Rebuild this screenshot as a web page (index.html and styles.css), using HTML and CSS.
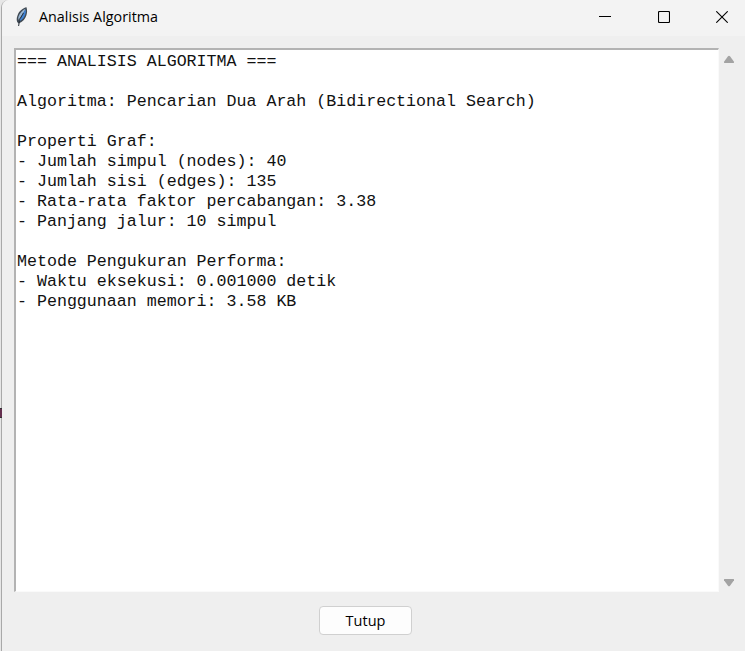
FILE: index.html
```html
<!DOCTYPE html>
<html lang="id">
<head>
<meta charset="utf-8">
<title>Analisis Algoritma</title>
<link rel="stylesheet" href="styles.css">
</head>
<body>
<div class="desktop">
  <span class="backdrop-mark"></span>
  <main class="window">
    <header class="titlebar">
      <svg class="feather" width="14" height="20" viewBox="0 0 14 20">
        <path d="M11.500 .3C8 1 4 4 2.500 8.500c-1 2.500-1 4.500-.3 6.500l1.300 1.500C8 15 10.500 11.500 11.500 8c.8-2.500.8-5 0-7.700z" fill="#414b55"/>
        <path d="M10.500 1.800C7.500 3.200 4.500 6.200 3.400 10l-.2 3 2-2.500L9.500 4z" fill="#9bb7d2"/>
        <path d="M10.700 2.500L7 7.500 4.600 14C8 12.500 9.600 9.500 10.400 7c.6-1.700.6-3 .3-4.500z" fill="#3e83d6"/>
        <path d="M8.500 6L5.300 11.500M4.500 13.500L3.600 19" fill="none" stroke="#29313a" stroke-width="1"/>
      </svg>
      <h1 class="title">Analisis Algoritma</h1>
      <div class="controls">
        <svg width="12" height="12" viewBox="0 0 12 12"><path d="M0 5.500h12" stroke="#000" shape-rendering="crispEdges"/></svg>
        <svg width="12" height="12" viewBox="0 0 12 12"><rect x=".5" y=".5" width="11" height="11" rx="1" fill="none" stroke="#000" stroke-width="1.100"/></svg>
        <svg width="12" height="12" viewBox="0 0 12 12"><path d="M.3.300l11.400 11.400M11.700.300L.3 11.700" stroke="#000" stroke-width="1.100"/></svg>
      </div>
    </header>
    <section class="content">
      <pre class="report">=== ANALISIS ALGORITMA ===

Algoritma: Pencarian Dua Arah (Bidirectional Search)

Properti Graf:
- Jumlah simpul (nodes): 40
- Jumlah sisi (edges): 135
- Rata-rata faktor percabangan: 3.38
- Panjang jalur: 10 simpul

Metode Pengukuran Performa:
- Waktu eksekusi: 0.001000 detik
- Penggunaan memori: 3.58 KB</pre>
      <div class="scrollbar">
        <svg width="12" height="9" viewBox="0 0 12 9"><path d="M5 1.200Q6 .1 7 1.200L11 6.800Q11.300 8 10.300 8H1.700Q.7 8 1 6.800z" fill="#a3a3a3"/></svg>
        <svg width="12" height="9" viewBox="0 0 12 9"><path d="M5 7.800Q6 8.900 7 7.800L11 2.200Q11.300 1 10.300 1H1.700Q.7 1 1 2.200z" fill="#a3a3a3"/></svg>
      </div>
    </section>
    <footer class="actions"><button class="close-button">Tutup</button></footer>
  </main>
</div>
</body>
</html>
```
FILE: styles.css
```css
* { box-sizing: border-box; }
body { margin: 0; background: #e6e6e6; overflow: hidden; }
.desktop { position: relative; width: 745px; height: 651px; padding-left: 1px; }
.backdrop-mark {
  position: absolute; left: 0; top: 408px; width: 2px; height: 10px; z-index: 1;
  background: #65304f; border-top: 1px solid #333; border-bottom: 1px solid #333;
}
.window {
  display: flex; flex-direction: column; height: 651px;
  border-left: 1px solid #a9a9a9; border-top-left-radius: 8px;
  background: #efefef; overflow: hidden;
}
.titlebar {
  display: flex; align-items: center; height: 36px; flex: none;
  padding: 0 17px 2px 13px; background: #f3f3f3;
}
.feather { margin-top: -1px; }
.title {
  margin: 0 0 0 10px; font: 400 14.300px/20px "Open Sans", "Noto Sans", sans-serif;
  letter-spacing: .02px; color: #000; white-space: nowrap;
}
.controls { display: flex; gap: 46.500px; margin-left: auto; }
.content { display: flex; height: 544px; margin-top: 12px; padding-left: 12px; flex: none; }
.report {
  width: 705px; height: 544px; margin: 0; padding: 2px 0 0 1px;
  border: solid; border-width: 2px 1px 1px 2px;
  border-color: #b3b3b3 #fafafa #fafafa #b3b3b3;
  background: #fff; color: #111;
  font: 400 16.640px/20px "Liberation Mono", monospace;
}
.scrollbar {
  display: flex; flex-direction: column; justify-content: space-between;
  padding: 7px 0 5px 4px;
}
.actions { display: flex; padding: 14px 0 0 317px; }
.close-button {
  width: 93px; height: 29px; padding: 0; border: 1px solid #d0d0d0;
  border-radius: 4px; background: #fdfdfd; color: #000;
  font: 400 14.500px/20px "Open Sans", "Noto Sans", sans-serif;
}
```
